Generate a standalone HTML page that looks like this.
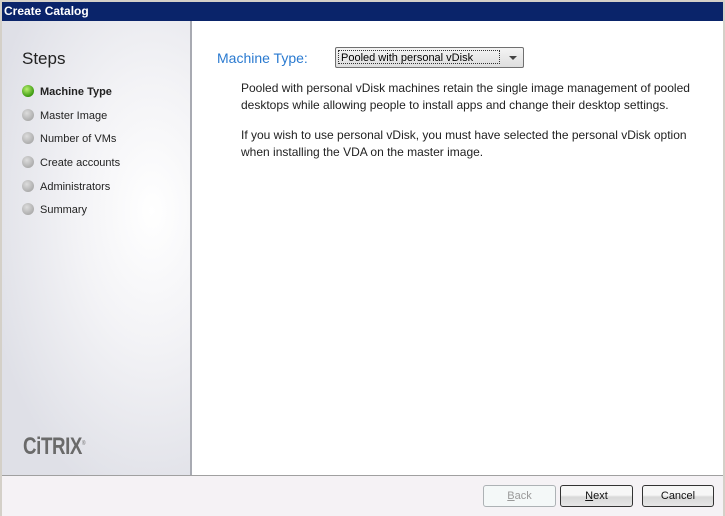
<!DOCTYPE html>
<html><head><style>
body{margin:0;width:725px;height:515px;overflow:hidden;background:#d4d0c8;font-family:"Liberation Sans",sans-serif;position:relative}
.t{position:absolute;left:2px;top:2px;width:721px;height:19px;background:#0a246a;color:#fff;font-weight:bold;font-size:12px;line-height:19px;padding-left:2px;box-sizing:border-box}
.l{position:absolute;left:2px;top:21px;width:190px;height:454px;background:radial-gradient(ellipse at 150px 190px,#ffffff 0%,#f3f3f6 35%,#dfe0e7 80%);border-right:2px solid #a8aab2;box-sizing:border-box}
.r{position:absolute;left:192px;top:21px;width:531px;height:454px;background:#fff}
.f{position:absolute;left:2px;top:475px;width:721px;height:40px;background:#f5f2f5;border-top:1px solid #a0a0a0}
.steps{position:absolute;left:22px;top:49px;font-size:17px;color:#222}
.s{position:absolute;left:22px;font-size:11px;color:#222}
.s i{display:inline-block;width:12px;height:12px;border-radius:50%;background:radial-gradient(circle at 40% 35%,#ddd,#999);vertical-align:-2px;margin-right:6px}
.s.a{font-weight:bold}
.s.a i{background:radial-gradient(circle at 40% 35%,#b8f070,#3c9a10 70%,#1d6a00)}
.mt{position:absolute;left:217px;top:50px;font-size:14px;color:#2a7ad0}
.dd{position:absolute;left:335px;top:47px;width:189px;height:21px;border:1px solid #707070;border-radius:2px;background:linear-gradient(#f4f4f4,#dedede);box-sizing:border-box;font-size:11px}
.dd span{position:absolute;left:2px;top:2px;width:162px;height:14px;border:1px dotted #333;line-height:14px;padding-left:2px;box-sizing:border-box}
.dd b{position:absolute;right:6px;top:8px;border:4px solid transparent;border-top:4px solid #444;border-bottom:0}
.p{position:absolute;left:241px;font-size:12px;color:#222;line-height:17px;width:460px}
.btn{position:absolute;top:485px;height:22px;border:1px solid #6a6a6a;border-radius:3px;background:linear-gradient(#f6f6f6 45%,#d8d8d8 55%,#e6e6e6);font-size:11px;text-align:center;line-height:21px;box-sizing:border-box;color:#111}
.cx{position:absolute;left:23px;top:433px;font-size:24px;font-weight:bold;color:#6a6a6a;letter-spacing:-0.5px;transform:scaleX(0.78);transform-origin:left}
</style></head><body>
<div class="t">Create Catalog</div>
<div class="l"></div>
<div class="r"></div>
<div class="f"></div>
<div class="steps">Steps</div>
<div class="s a" style="top:85px"><i></i>Machine Type</div>
<div class="s" style="top:109px"><i></i>Master Image</div>
<div class="s" style="top:132px"><i></i>Number of VMs</div>
<div class="s" style="top:156px"><i></i>Create accounts</div>
<div class="s" style="top:180px"><i></i>Administrators</div>
<div class="s" style="top:203px"><i></i>Summary</div>
<div class="cx">CiTRIX<sup style="font-size:6px;font-weight:normal">®</sup></div>
<div class="mt">Machine Type:</div>
<div class="dd"><span>Pooled with personal vDisk</span><b></b></div>
<div class="p" style="top:80px">Pooled with personal vDisk machines retain the single image management of pooled desktops while allowing people to install apps and change their desktop settings.</div>
<div class="p" style="top:127px">If you wish to use personal vDisk, you must have selected the personal vDisk option when installing the VDA on the master image.</div>
<div class="btn" style="left:483px;width:73px;background:#f4f8f8;border-color:#adb2b5;color:#9a9a9a"><u>B</u>ack</div>
<div class="btn" style="left:560px;width:73px;border-color:#333"><u>N</u>ext</div>
<div class="btn" style="left:642px;width:72px;border-color:#333">Cancel</div>
</body></html>
